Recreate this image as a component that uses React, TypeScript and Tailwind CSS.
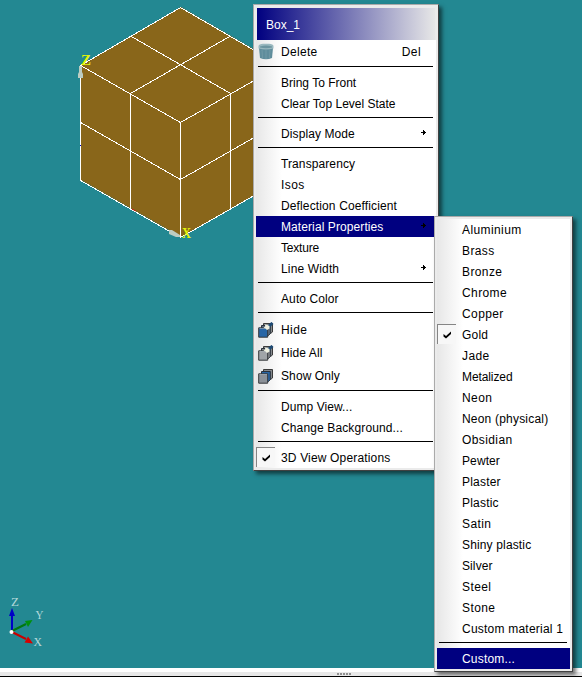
import React from "react";

type Item =
  | { kind: "sep" }
  | {
      kind: "item";
      label: string;
      icon?: React.ReactNode;
      shortcut?: string;
      sub?: boolean;
      active?: boolean;
      checked?: boolean;
      tall?: boolean;
      tracking?: string;
    };

const sep: Item = { kind: "sep" };
const row = (label: string, tracking = "tracking-[0.4px]", extra: object = {}): Item => ({
  kind: "item",
  label,
  tracking,
  ...extra,
});

function Trash() {
  return (
    <svg width="16" height="17" viewBox="0 0 16 17">
      <path d="M1 5L2 15Q8 17.500 14 15L15 5Z" fill="#5f8d9c" />
      <path d="M4 7L4.500 15M8 7V16M12 7L11.500 15" stroke="#7099a6" />
      <path d="M0.500 3Q1 1 5 0.800H11Q15 1 15.500 3V5.500Q8 7.500 0.500 5.500Z" fill="#9ab8bf" />
      <path d="M2 3.500Q8 1.500 14 3.500V4.500Q8 6 2 4.500Z" fill="#6c949f" />
    </svg>
  );
}

function Layers({ front, middle, wand }: { front: string; middle: string; wand?: boolean }) {
  return (
    <svg width="16" height="16" viewBox="0 0 16 16">
      <path d="M5.500 1.500H14.500V10L12.500 11.500H5.500Z" fill="#85898d" stroke="#3b3b3b" />
      <path d="M3.500 3.500H12.300V11.500L10.500 13.500H3.500Z" fill={middle} stroke="#29313a" />
      <path d="M0.700 5.800H9.700V15.200H0.700Z" fill={front} stroke="#35383b" />
      <path d="M1.500 6.500H9" stroke="#c5cdd4" opacity="0.5" />
      {wand && (
        <>
          <path d="M10 5L14.500 1" stroke="#1d4a74" strokeWidth="3" />
          <path d="M7 2.500L9.500 3L11.500 4L11.500 6.500L9 8L7.500 6.500L5.500 5.500L7.200 4.500Z" fill="#eff1e2" />
        </>
      )}
    </svg>
  );
}

function Check() {
  return (
    <span className="-mt-px flex h-5 w-[19px] items-center justify-center border-t border-l border-[#858585] bg-[#f7f7f7]">
      <svg width="9" height="8" viewBox="0 0 9 8">
        <path d="M0.500 3L3 5L8 0.500V3L3 7.500L0.500 5.500Z" fill="#000" />
      </svg>
    </span>
  );
}

const mainItems: Item[] = [
  row("Delete", "tracking-[0.3px]", { icon: <Trash />, shortcut: "Del", tall: true }),
  sep,
  row("Bring To Front", "tracking-[0px]"),
  row("Clear Top Level State", "tracking-[0px]"),
  sep,
  row("Display Mode", "tracking-[0.1px]", { sub: true }),
  sep,
  row("Transparency", "tracking-[0.1px]"),
  row("Isos"),
  row("Deflection Coefficient", "tracking-[0.13px]"),
  row("Material Properties", "tracking-[0.09px]", { sub: true, active: true }),
  row("Texture", "tracking-[-0.2px]"),
  row("Line Width", "tracking-[0.15px]", { sub: true }),
  sep,
  row("Auto Color", "tracking-[0.1px]"),
  sep,
  row("Hide", "tracking-[0.4px]", { icon: <Layers front="#2866a6" middle="#5f6f80" wand />, tall: true }),
  row("Hide All", "tracking-[0.1px]", { icon: <Layers front="#a0a4a8" middle="#85888c" wand />, tall: true }),
  row("Show Only", "tracking-[0.1px]", { icon: <Layers front="#8b9198" middle="#2866a6" />, tall: true }),
  sep,
  row("Dump View...", "tracking-[0.07px]"),
  row("Change Background...", "tracking-[0.13px]"),
  sep,
  row("3D View Operations", "tracking-[0.16px]", { checked: true }),
];

const materialItems: Item[] = [
  row("Aluminium"),
  row("Brass"),
  row("Bronze"),
  row("Chrome"),
  row("Copper"),
  row("Gold", "tracking-[0.2px]", { checked: true }),
  row("Jade"),
  row("Metalized", "tracking-[-0.1px]"),
  row("Neon"),
  row("Neon (physical)", "tracking-[0.2px]"),
  row("Obsidian"),
  row("Pewter", "tracking-[0.1px]"),
  row("Plaster", "tracking-[0.2px]"),
  row("Plastic", "tracking-[0.2px]"),
  row("Satin"),
  row("Shiny plastic", "tracking-[0.15px]"),
  row("Silver", "tracking-[0.1px]"),
  row("Steel"),
  row("Stone"),
  row("Custom material 1", "tracking-[0.22px]"),
  sep,
  row("Custom...", "tracking-[0.2px]", { active: true }),
];

function Rows({ items }: { items: Item[] }) {
  return (
    <div className="bg-linear-to-r/srgb from-[#e7e7e7] from-0% to-white to-[26px]">
      {items.map((it, i) =>
        it.kind === "sep" ? (
          <div key={i} className="h-[9px] pt-[3px] pr-[3px] pl-[2px]">
            <div className="h-px bg-black" />
          </div>
        ) : (
          <div
            key={i}
            className={`flex items-center ${it.tall ? "h-[23px]" : "h-[21px]"} ${it.active ? "bg-[#000080] text-white" : "text-black"}`}
          >
            <span className={`flex w-[25px] shrink-0 ${it.icon ? "pl-[2px]" : ""}`}>
              {it.checked ? <Check /> : it.icon}
            </span>
            <span className={`grow ${it.tracking}`}>{it.label}</span>
            {it.shortcut && <span className="pr-[15px] tracking-[0.4px]">{it.shortcut}</span>}
            {it.sub && (
              <svg width="5" height="5" viewBox="0 0 5 5" className="-mt-[2px] mr-[10px]">
                <path d="M0 2H2V0H3V1H4V2H5V3H4V4H3V5H2V3H0Z" fill="#000" shapeRendering="crispEdges" />
              </svg>
            )}
          </div>
        ),
      )}
    </div>
  );
}

const frame =
  "border border-t-[#aaa] border-l-[#aaa] border-r-[#404040] border-b-[#404040] bg-[#ebebeb] shadow-[3px_3px_4px_rgba(0,0,0,0.55)]";

function Scene() {
  return (
    <svg className="block" width="582" height="668" viewBox="0 0 582 668">
      <path d="M181 7L281 65V180L181 237L81 180V65Z" fill="#89661a" />
      <g fill="none" stroke="#fff" shapeRendering="crispEdges">
        <path d="M80.500 65.500L180.500 7.500L280.500 65.500M80.500 65.500V180.500L180.500 237.500L280.500 180.500" />
        <path d="M80.500 65.500L180.500 122.500L280.500 65.500M180.500 122.500V237.500" />
        <path d="M130.500 36L230.500 93.500V209M230.500 36L130.500 93.500V209" />
        <path d="M80.500 122.500L180.500 179.500L280.500 122.500" />
      </g>
      <path d="M80 145h1v1h-1Z" fill="#0000d0" />
      <path d="M132 209l4 2" stroke="#d02010" />
      <path d="M79 66h3v6l1 2v4h-5v-4l1-2Z" fill="#bdcdc2" />
      <path d="M169 230h3l8 5v2h-4l-7-3Z" fill="#bdcdc2" />
      <g fill="#e4f508" className="font-['Liberation_Serif',serif] text-[15px] font-bold">
        <text x="81" y="65">Z</text>
        <text x="182" y="238" textLength="9" lengthAdjust="spacingAndGlyphs">X</text>
      </g>
      <path d="M12 631V614" stroke="#0000c8" strokeWidth="2" />
      <path d="M12 608L15 616H9Z" fill="#0000c8" />
      <path d="M12 631L26 624" stroke="#00780f" strokeWidth="2" />
      <path d="M32.500 620L28 627L25 621Z" fill="#00900c" />
      <path d="M12 632L26 639" stroke="#c80000" strokeWidth="2" />
      <path d="M33 643.500L24.500 642.500L28 636.500Z" fill="#d80000" />
      <circle cx="11.500" cy="632" r="2" fill="#fff" />
      <g fill="#b4d8da" className="font-['Liberation_Serif',serif] text-[13px]">
        <text x="11" y="606">Z</text>
        <text x="35.500" y="619" textLength="8" lengthAdjust="spacingAndGlyphs">Y</text>
        <text x="33.500" y="646" textLength="8.500" lengthAdjust="spacingAndGlyphs">X</text>
      </g>
    </svg>
  );
}

export default function App() {
  return (
    <div className="relative h-[677px] w-[582px] overflow-hidden bg-[#238892] font-['Liberation_Sans',Arial,sans-serif] text-[12px] leading-[14px] whitespace-nowrap">
      <div className="flex flex-col">
        <Scene />
        <div className="h-1 bg-white" />
        <div className="flex h-1 gap-px bg-[#e8e8e8] pt-px pl-[337px]">
          {[0, 1, 2, 3, 4].map((n) => (
            <i key={n} className="size-[2px] bg-[#909090]" />
          ))}
        </div>
        <div className="h-px bg-black" />
      </div>
      <div className={`absolute top-1 left-[253px] h-[467px] w-[186px] pt-[3px] pr-[2px] pl-[2px] ${frame}`}>
        <div className="mx-px flex h-8 items-center bg-linear-to-r/srgb from-[#000080] to-[#e7e7e7] pt-px pl-[9px] tracking-[0px] text-white">
          Box_1
        </div>
        <Rows items={mainItems} />
      </div>
      <div className={`absolute top-[216px] left-[434px] h-[456px] w-[139px] p-[2px] ${frame}`}>
        <Rows items={materialItems} />
      </div>
    </div>
  );
}
